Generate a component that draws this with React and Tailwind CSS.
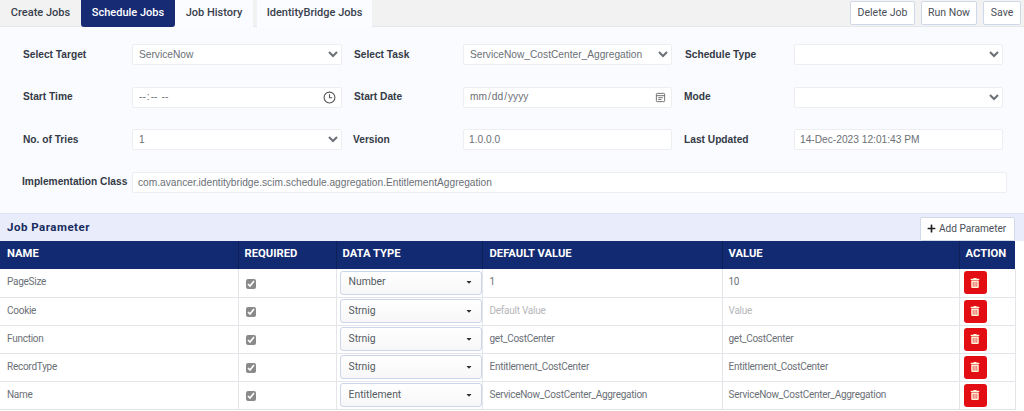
import React from "react";
import { FaPlus, FaTrashAlt, FaCaretDown } from "react-icons/fa";

const rows = [
  { name: "PageSize", type: "Number", def: "1", value: "10" },
  { name: "Cookie", type: "Strnig", def: "", value: "" },
  { name: "Function", type: "Strnig", def: "get_CostCenter", value: "get_CostCenter" },
  { name: "RecordType", type: "Strnig", def: "Entitlement_CostCenter", value: "Entitlement_CostCenter" },
  { name: "Name", type: "Entitlement", def: "ServiceNow_CostCenter_Aggregation", value: "ServiceNow_CostCenter_Aggregation" },
];

const fieldCls =
  "block h-[21px] w-full rounded-[2px] border border-[#eceef2] bg-white font-['Liberation_Sans',sans-serif] text-[10.2px] text-[#6b7077] outline-none";

const Label = ({ children, className = "" }) => (
  <label className={`font-['Liberation_Sans',sans-serif] text-[10.2px] font-bold text-[#343a46] whitespace-nowrap ${className}`}>
    {children}
  </label>
);

const Select = ({ value }) => (
  <select className={`${fieldCls} pl-[2px] pr-[1px]`} defaultValue={value} style={{ appearance: "auto" }}>
    <option value={value}>{value}</option>
  </select>
);

const Text = ({ value }) => <input readOnly defaultValue={value} className={`${fieldCls} px-[5px]`} />;

const pickerCls = "[&::-webkit-calendar-picker-indicator]:opacity-0";

const App = () => {
  return (
    <div className="h-[411px] w-[1024px] overflow-hidden bg-white font-['Roboto','Liberation_Sans',sans-serif]">
      {/* tabs */}
      <div className="flex h-[27px] items-start justify-between border-b border-[#e6e7ea] bg-[#f2f2f2]">
        <div className="flex h-[27px] text-[11px] font-medium text-[#39404c]">
          <button className="w-[81px]">Create Jobs</button>
          <button className="h-[27px] w-[94px] rounded-b-[3px] bg-[#172b75] pb-[1px] text-white">Schedule Jobs</button>
          <button className="h-[27px] w-[78px] bg-[#fbfcff]">Job History</button>
          <button className="ml-[4px] h-[27px] w-[115px] bg-[#fbfcff]">IdentityBridge Jobs</button>
        </div>
        <div className="mr-[3px] mt-[1px] flex gap-[6px] text-[10.5px] text-[#4a4f57]">
          <button className="h-[24px] w-[65px] rounded-[2px] border border-[#cfd8e8] bg-white">Delete Job</button>
          <button className="h-[24px] w-[56px] rounded-[2px] border border-[#cfd8e8] bg-white">Run Now</button>
          <button className="h-[24px] w-[38px] rounded-[2px] border border-[#cfd8e8] bg-white">Save</button>
        </div>
      </div>

      {/* form */}
      <div className="h-[186px] bg-[#f9fbff] pl-[23px] pr-[17px] pt-[17px]">
        <div className="grid w-[980px] grid-cols-[109px_210px_121px_209px_122px_209px] items-center gap-y-[21.5px]">
          <Label>Select Target</Label>
          <Select value="ServiceNow" />
          <Label className="pl-[12px]">Select Task</Label>
          <Select value="ServiceNow_CostCenter_Aggregation" />
          <Label className="pl-[13px]">Schedule Type</Label>
          <Select value="" />

          <Label>Start Time</Label>
          <div className="relative">
            <input type="time" className={`${fieldCls} ${pickerCls} pl-[5px] pr-[7px]`} />
            <svg viewBox="0 0 24 24" className="pointer-events-none absolute right-[6px] top-[4px] h-[13px] w-[13px]" fill="none" stroke="#555" strokeWidth="2">
              <circle cx="12" cy="12" r="10" />
              <path d="M12 6v6.5h5" />
            </svg>
          </div>
          <Label className="pl-[12px]">Start Date</Label>
          <div className="relative">
            <input type="date" className={`${fieldCls} ${pickerCls} pl-[5px] pr-[7px]`} />
            <svg viewBox="0 0 24 24" className="pointer-events-none absolute right-[6px] top-[5px] h-[11px] w-[11px]" fill="none" stroke="#666" strokeWidth="2">
              <rect x="3" y="3" width="18" height="18" rx="2" />
              <path d="M3 8h18M7 12.5h10M7 16.5h7" />
            </svg>
          </div>
          <Label className="pl-[12px]">Mode</Label>
          <Select value="" />

          <Label>No. of Tries</Label>
          <Select value="1" />
          <Label className="pl-[11px]">Version</Label>
          <Text value="1.0.0.0" />
          <Label className="pl-[12px]">Last Updated</Label>
          <Text value="14-Dec-2023 12:01:43 PM" />
        </div>
        <div className="mt-[21.5px] flex items-center">
          <Label className="-ml-[1px] w-[110px] shrink-0">Implementation Class</Label>
          <Text value="com.avancer.identitybridge.scim.schedule.aggregation.EntitlementAggregation" />
        </div>
      </div>

      {/* job parameter */}
      <div className="flex h-[28px] items-center justify-between border-t border-[#dfe5f7] bg-[#e8ecfb] pl-[7px] pr-[9px]">
        <h2 className="text-[11.5px] font-bold tracking-[0.5px] text-[#172b5e]">Job Parameter</h2>
        <button className="mt-[2px] flex h-[24px] w-[95px] items-center gap-[3px] rounded-[2px] border border-[#d3d9e8] bg-white pl-[6px] text-[10.1px] text-[#4a4f57]">
          <FaPlus size={9} className="text-[#222]" /> Add Parameter
        </button>
      </div>

      <table className="w-[1015px] table-fixed border-collapse text-left text-[10px] tracking-[-0.26px] text-[#6b7077]">
        <colgroup>
          <col className="w-[238px]" />
          <col className="w-[98px]" />
          <col className="w-[146px]" />
          <col className="w-[240px]" />
          <col className="w-[237px]" />
          <col className="w-[56px]" />
        </colgroup>
        <thead className="bg-[#122a72] text-[11.25px] tracking-normal text-white">
          <tr className="h-[28px]">
            <th className="pb-[2px] pl-[7px] font-bold">NAME</th>
            <th className="border-l border-[#0d2058] pb-[2px] pl-[6px] font-bold">REQUIRED</th>
            <th className="border-l border-[#0d2058] pb-[2px] pl-[6px] font-bold">DATA TYPE</th>
            <th className="border-l border-[#0d2058] pb-[2px] pl-[7px] font-bold">DEFAULT VALUE</th>
            <th className="border-l border-[#0d2058] pb-[2px] pl-[6px] font-bold">VALUE</th>
            <th className="border-l border-[#0d2058] pb-[2px] pl-[6px] font-bold">ACTION</th>
          </tr>
        </thead>
        <tbody>
          {rows.map((row) => (
            <tr key={row.name} className="h-[28px] border-b border-[#e3e5e8]">
              <td className="pb-[2px] pl-[7px]">{row.name}</td>
              <td className="border-l border-[#e3e5e8] pl-[7px]">
                <input type="checkbox" readOnly checked className="mt-[2px] block h-[10px] w-[10px] accent-[#8a8a8a]" />
              </td>
              <td className="border-l border-[#e3e5e8] px-[3px]">
                <button className="flex h-[24px] w-[142px] items-center justify-between rounded-[3px] border border-[#cbd6ea] bg-gradient-to-b from-white to-[#f7f7f7] pb-[1px] pl-[8px] pr-[8px] text-[10.4px] tracking-normal text-[#555b63]">
                  {row.type}
                  <FaCaretDown size={8} className="text-[#333]" />
                </button>
              </td>
              <td className="border-l border-[#e3e5e8] pb-[2px] pl-[7px]">
                {row.def || <span className="text-[#b5b7ba]">Default Value</span>}
              </td>
              <td className="border-l border-[#e3e5e8] pb-[2px] pl-[6px]">
                {row.value || <span className="text-[#b5b7ba]">Value</span>}
              </td>
              <td className="border-x border-[#e3e5e8] pl-[4px]">
                <button className="flex h-[23px] w-[23px] items-center justify-center rounded-[3px] bg-[#e20e14]">
                  <FaTrashAlt size={10} className="text-[#fff4dc]" />
                </button>
              </td>
            </tr>
          ))}
        </tbody>
      </table>
    </div>
  );
};

export default App;
